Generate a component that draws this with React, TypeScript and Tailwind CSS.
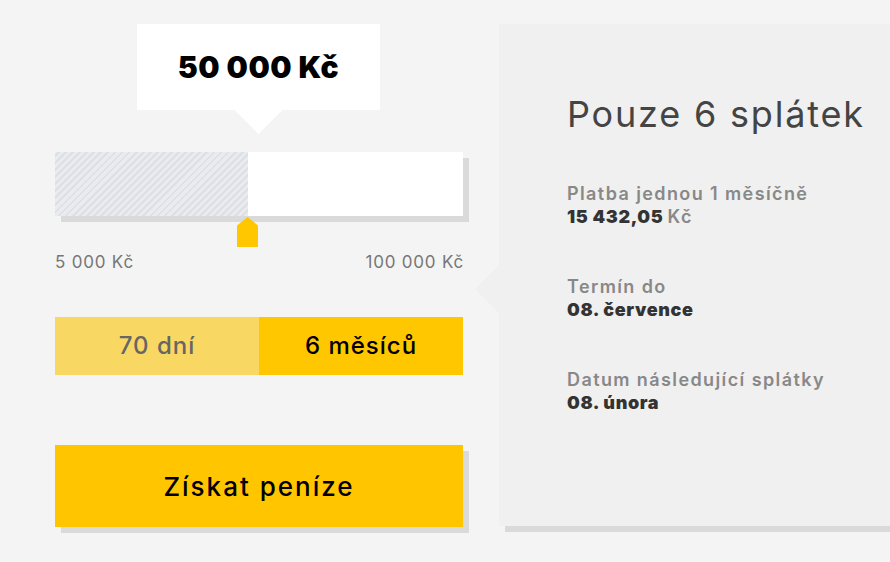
import React from "react";

const font = { fontFamily: "Inter, 'Noto Sans', sans-serif" };

export default function App() {
  return (
    <div
      className="w-[890px] h-[562px] overflow-hidden bg-[#f4f4f4] flex pt-[24px] pl-[55px]"
      style={font}
    >
      {/* Left column */}
      <div className="w-[414px] flex flex-col shrink-0">
        {/* Tooltip */}
        <div className="relative w-[243px] h-[86px] ml-[82px] bg-white flex items-center justify-center">
          <span className="text-[30px] font-black text-black tracking-[0.5px]">50 000 Kč</span>
          <div className="absolute left-1/2 -translate-x-1/2 top-[86px] w-[48px] h-[24px] bg-white [clip-path:polygon(0_0,100%_0,50%_100%)]" />
        </div>

        {/* Track */}
        <div className="relative mt-[42px] w-[408px] h-[64px]">
          <div className="absolute left-[6px] top-[6px] w-[408px] h-[64px] bg-[#dadada]" />
          <div className="relative w-[408px] h-[64px] bg-white flex">
            <div className="w-[193px] h-full bg-[repeating-linear-gradient(-45deg,#e9ebef_0px,#e9ebef_3px,#dcdfe4_3px,#dcdfe4_5px)]" />
          </div>
          <div className="absolute left-[182px] top-[65px] w-[21px] h-[30px] bg-[#ffc700] [clip-path:polygon(50%_0,100%_28%,100%_100%,0_100%,0_28%)]" />
        </div>

        {/* Labels */}
        <div className="mt-[36px] w-[408px] flex justify-between text-[17px] tracking-[0.8px] text-[#777] leading-[20px]">
          <span>5 000 Kč</span>
          <span className="-mr-[1px]">100 000 Kč</span>
        </div>

        {/* Toggle */}
        <div className="mt-[45px] w-[408px] h-[58px] flex text-[24px] tracking-[1px] font-medium">
          <div className="w-[204px] bg-[#f9d763] flex items-center justify-center text-[#666]">70 dní</div>
          <div className="flex-1 bg-[#ffc700] flex items-center justify-center text-black">6 měsíců</div>
        </div>

        {/* Button */}
        <div className="relative mt-[70px] w-[408px] h-[82px]">
          <div className="absolute left-[6px] top-[6px] w-[408px] h-[82px] bg-[#dadada]" />
          <button className="relative w-[408px] h-[82px] bg-[#ffc600] flex items-center justify-center text-[26px] tracking-[2px] font-medium text-black">
            Získat peníze
          </button>
        </div>
      </div>

      {/* Right panel */}
      <div className="relative ml-[30px] w-[420px] h-[502px] shrink-0">
        <div className="absolute left-[6px] top-[6px] w-[420px] h-[502px] bg-[#dadada]" />
        <div className="absolute left-[-24px] top-[241px] w-[24px] h-[48px] bg-[#f0f0f0] [clip-path:polygon(100%_0,100%_100%,0_50%)]" />
        <div className="relative w-[420px] h-[502px] bg-[#f0f0f0] pl-[68px] pt-[68px]">
          <h1 className="text-[36px] leading-[44px] tracking-[1.8px] text-[#444] font-normal">Pouze 6 splátek</h1>
          <div className="mt-[46px] flex flex-col gap-[47px]">
            <div className="leading-[23px]">
              <div className="text-[18px] tracking-[1.4px] font-semibold text-[#888]">Platba jednou 1 měsíčně</div>
              <div className="text-[18px] tracking-[0.6px] font-black text-[#333]">
                15 432,05 <span className="font-semibold tracking-[1.4px] text-[#888]">Kč</span>
              </div>
            </div>
            <div className="leading-[23px]">
              <div className="text-[18px] tracking-[1.4px] font-semibold text-[#888]">Termín do</div>
              <div className="text-[18px] tracking-[0.6px] font-black text-[#333]">08. července</div>
            </div>
            <div className="leading-[23px]">
              <div className="text-[18px] tracking-[1.4px] font-semibold text-[#888]">Datum následující splátky</div>
              <div className="text-[18px] tracking-[0.6px] font-black text-[#333]">08. února</div>
            </div>
          </div>
        </div>
      </div>
    </div>
  );
}
